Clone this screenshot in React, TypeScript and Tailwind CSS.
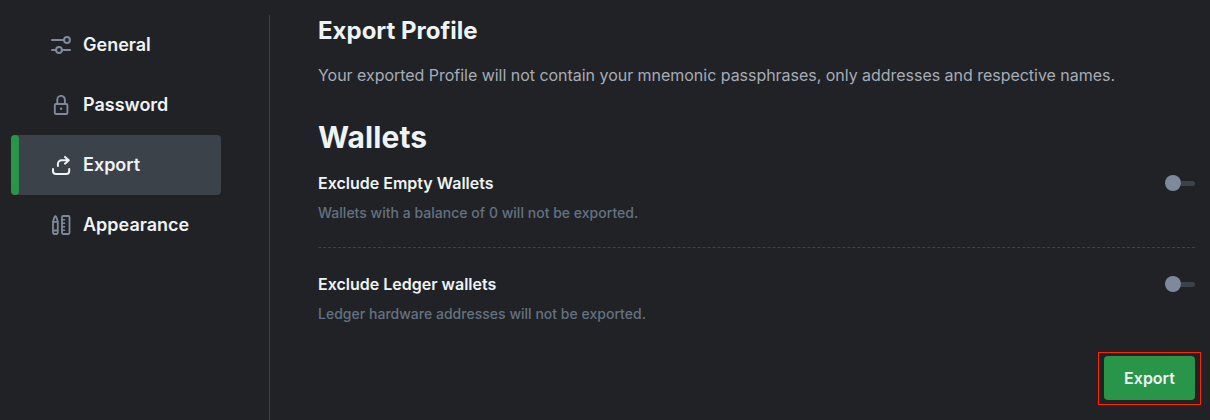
import React from "react";

function SlidersIcon() {
  return (
    <svg width="20" height="20" viewBox="0 0 20 20" fill="none" stroke="currentColor" strokeWidth="2" strokeLinecap="round">
      <path d="M1 5h12M1 15h4M11 15h8" />
      <circle cx="16" cy="5" r="2.900" />
      <circle cx="8" cy="15" r="2.900" />
    </svg>
  );
}

function LockIcon() {
  return (
    <svg width="20" height="20" viewBox="0 0 20 20" fill="none" stroke="currentColor" strokeWidth="1.9" strokeLinecap="round" strokeLinejoin="round">
      <rect x="3.800" y="9" width="12.600" height="10" rx="1.300" />
      <path d="M6.300 8.500V4.700a3.800 3.800 0 0 1 7.600 0v3.800" />
      <circle cx="10.100" cy="13.800" r="1.200" fill="currentColor" stroke="none" />
    </svg>
  );
}

function ExportIcon() {
  return (
    <svg width="20" height="20" viewBox="0 0 20 20" fill="none" stroke="currentColor" strokeWidth="2" strokeLinecap="round" strokeLinejoin="round">
      <path d="M2 14v2a3 3 0 0 0 3 3h10.200a3 3 0 0 0 3-3v-2" />
      <path d="M6.900 11V9a3.700 3.700 0 0 1 3.700-3.700h7M14 1.900l3.800 3.400L14 8.700" />
    </svg>
  );
}

function AppearanceIcon() {
  return (
    <svg width="20" height="20" viewBox="0 0 20 20" fill="none" stroke="currentColor" strokeWidth="1.8" strokeLinecap="round" strokeLinejoin="round">
      <path d="M2 6.500l1.600-4.600q.8-1.500 1.600 0l1.600 4.600V17.500a1.500 1.500 0 0 1-1.500 1.500H3.500A1.500 1.500 0 0 1 2 17.500zM2 6.800h4.800M2 15.500h4.800" />
      <rect x="11" y="1" width="7.500" height="18" rx="1.200" />
      <path d="M11 4.700h2.600M11 8.200h2.600M11 11.800h2.600M11 15.300h2.600" strokeWidth="1.400" />
    </svg>
  );
}

const items = [
  { label: "General", Icon: SlidersIcon },
  { label: "Password", Icon: LockIcon },
  { label: "Export", Icon: ExportIcon },
  { label: "Appearance", Icon: AppearanceIcon },
];

function Toggle() {
  return (
    <button className="flex h-4 w-[30px] items-center" role="switch" aria-checked="false">
      <span className="size-4 rounded-full bg-[#7e8a9c]" />
      <span className="h-[5px] flex-1 rounded-r-sm bg-[#3c4249]" />
    </button>
  );
}

export default function App() {
  return (
    <div className="flex h-[420px] w-[1210px] overflow-hidden bg-[#212225] font-['Inter',sans-serif] text-[#eef3f5]">
      <nav className="mt-[15px] flex w-[270px] shrink-0 flex-col border-r border-[#3c4249] pl-[11px]">
        {items.map(({ label, Icon }) => {
          const active = label === "Export";
          return (
            <a key={label} className={active ? "flex h-[60px] w-[210px] items-center rounded bg-[#3c4249]" : "flex h-[60px] w-[210px] items-center text-[#7e8a9c]"}>
              <span className={active ? "h-full w-2 rounded bg-[#289548]" : "h-full w-2"} />
              <span className="ml-8 flex items-center gap-3">
                <Icon />
                <span className="text-lg font-semibold text-[#eef3f5]">{label}</span>
              </span>
            </a>
          );
        })}
      </nav>
      <main className="ml-12 w-[877px] pt-[15px]">
        <h2 className="text-2xl leading-8 font-bold">Export Profile</h2>
        <p className="mt-4 text-base leading-6 tracking-[-0.03px] text-[#a5adb9]">Your exported Profile will not contain your mnemonic passphrases, only addresses and respective names.</p>
        <h1 className="mt-[30px] text-3xl leading-10 font-bold tracking-[0.1px]">Wallets</h1>
        <section className="mt-[14px] border-b border-dashed border-[#3c4249] pb-6">
          <div className="flex h-6 items-center justify-between"><h3 className="font-semibold">Exclude Empty Wallets</h3><Toggle /></div>
          <p className="mt-2 text-sm font-medium tracking-[0.02px] text-[#637282]">Wallets with a balance of 0 will not be exported.</p>
        </section>
        <section className="pt-6">
          <div className="flex h-6 items-center justify-between"><h3 className="font-semibold">Exclude Ledger wallets</h3><Toggle /></div>
          <p className="mt-2 text-sm font-medium tracking-[0.02px] text-[#637282]">Ledger hardware addresses will not be exported.</p>
        </section>
        <div className="mt-7 -mr-[6px] flex justify-end">
          <div className="border border-[#ff2600] px-[5px] pt-[3px] pb-1"><button className="block h-11 w-[91px] rounded bg-[#289548] font-semibold">Export</button></div>
        </div>
      </main>
    </div>
  );
}
